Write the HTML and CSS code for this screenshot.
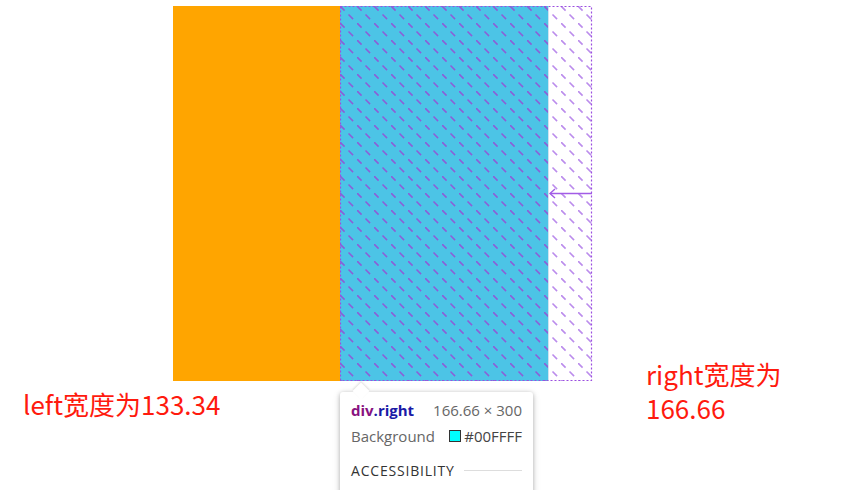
FILE: index.html
```html
<!DOCTYPE html>
<html>
<head>
<meta charset="utf-8">
<link rel="stylesheet" href="styles.css">
</head>
<body>
<div class="stage">
  <div class="boxes">
    <div class="left"></div>
    <div class="right"></div>
  </div>
  <svg class="overlay" width="253" height="376" viewBox="0 0 253 376">
    <defs>
      <pattern id="hatchDark" patternUnits="userSpaceOnUse" width="17" height="17">
        <line x1="0" y1="0" x2="17" y2="17" stroke="#8a5fd8" stroke-width="1.6" stroke-dasharray="6.5 5.5" />
      </pattern>
      <pattern id="hatchLight" patternUnits="userSpaceOnUse" width="17" height="17">
        <line x1="0" y1="0" x2="17" y2="17" stroke="#bb8cec" stroke-width="1.6" stroke-dasharray="6.5 5.5" />
      </pattern>
    </defs>
    <rect x="0" y="0" width="208" height="375" fill="url(#hatchDark)" />
    <rect x="209" y="0" width="43" height="375" fill="url(#hatchLight)" />
    <line x1="208.5" y1="0" x2="208.5" y2="375" stroke="#cfe3f0" stroke-width="1" />
    <rect x="0.5" y="0.5" width="251" height="374" fill="none" stroke="#9b4fe0" stroke-width="1.2" stroke-dasharray="2 2" />
    <line x1="210" y1="187.5" x2="252" y2="187.5" stroke="#a25ce6" stroke-width="1.4" />
    <polyline points="215,183 210,187.5 215,192" fill="none" stroke="#a25ce6" stroke-width="1.4" />
  </svg>
  <p class="note note-left">left宽度为133.34</p>
  <p class="note note-right">right宽度为<br>166.66</p>
  <div class="tip">
    <div class="tip-row">
      <span class="tip-name"><span class="tag">div</span><span class="cls">.right</span></span>
      <span class="tip-dim">166.66 × 300</span>
    </div>
    <div class="tip-row">
      <span class="tip-label">Background</span>
      <span class="tip-color"><span class="swatch"></span>#00FFFF</span>
    </div>
    <div class="tip-section">
      <span>ACCESSIBILITY</span>
      <span class="rule"></span>
    </div>
  </div>
</div>
</body>
</html>
```

FILE: styles.css
```css
html, body {
  margin: 0;
  padding: 0;
  background: #fff;
  width: 860px;
  height: 490px;
  overflow: hidden;
}

.stage {
  position: relative;
  width: 860px;
  height: 490px;
  overflow: hidden;
}

.boxes {
  display: flex;
  padding: 6px 0 0 173px;
  height: 375px;
}

.left {
  width: 167px;
  height: 375px;
  background: #ffa500;
}

.right {
  width: 208px;
  height: 375px;
  background: #4cc4e6;
}

.overlay {
  position: absolute;
  left: 340px;
  top: 6px;
}

.note {
  position: absolute;
  margin: 0;
  color: #ff1a0e;
  font-family: "Noto Sans CJK SC", "Noto Sans", sans-serif;
  font-size: 26px;
  line-height: 34px;
}

.note-left {
  left: 23px;
  top: 387px;
}

.note-right {
  left: 646px;
  top: 357px;
}

.tip {
  position: absolute;
  left: 340px;
  top: 392px;
  width: 171px;
  height: 110px;
  padding: 5px 11px;
  background: #fff;
  border-radius: 3px;
  box-shadow: 0 1px 4px rgba(0,0,0,0.25), 0 2px 8px rgba(0,0,0,0.12);
  font-family: "Open Sans", "Noto Sans", sans-serif;
  font-size: 15px;
  color: #555;
}

.tip::before {
  content: "";
  position: absolute;
  left: 15px;
  top: -7px;
  width: 12px;
  height: 12px;
  background: #fff;
  transform: rotate(45deg);
  box-shadow: -1px -1px 2px rgba(0,0,0,0.12);
}

.tip-row {
  position: relative;
  display: flex;
  justify-content: space-between;
  align-items: center;
  height: 26px;
}

.tip-name {
  font-weight: 700;
}

.tag {
  color: #881280;
}

.cls {
  color: #1a1aa6;
}

.tip-dim {
  color: #666;
}

.tip-label {
  color: #666;
}

.tip-color {
  display: flex;
  align-items: center;
  color: #444;
}

.swatch {
  width: 10px;
  height: 10px;
  margin-right: 3px;
  background: #00ffff;
  border: 1px solid #333;
}

.tip-section {
  display: flex;
  align-items: center;
  gap: 9px;
  margin-top: 12px;
  font-size: 14px;
  letter-spacing: 0.8px;
  color: #333;
}

.rule {
  flex: 1;
  height: 1px;
  background: #ddd;
}
```
